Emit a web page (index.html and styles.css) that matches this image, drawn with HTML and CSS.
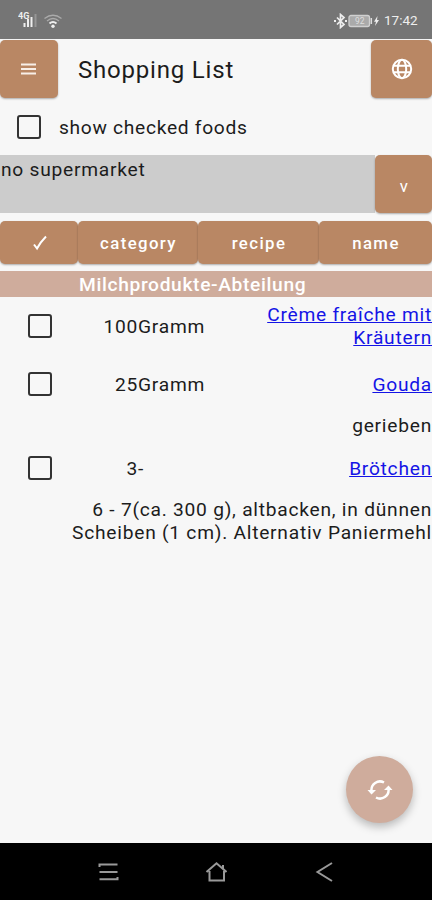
FILE: index.html
```html
<!DOCTYPE html>
<html lang="en">
<head>
    <meta charset="UTF-8">
    <meta name="viewport" content="width=device-width, initial-scale=1">
    <title>Shopping List</title>
    <link rel="stylesheet" href="styles.css">
</head>
<body>
    <div class="status-bar">
        <svg class="signal" width="19" height="18" viewBox="0 0 19 18">
            <path d="M6.500 17v-4M10 17V9M13.500 17V7" stroke="#eee" stroke-width="2"/>
            <path d="M17.500 17V4" stroke="#969696" stroke-width="2"/>
            <text x="0" y="9" font-size="9" font-weight="bold" fill="#eee">4G</text>
        </svg>
        <svg class="wifi" width="20" height="16" viewBox="0 0 20 16" fill="none">
            <path d="M1.5 5.5Q10-1 18.5 5.5M4 8Q10 3 16 8" stroke="#aaa" stroke-width="1.3"/>
            <path d="M6.5 10.5Q10 7.5 13.5 10.5" stroke="#eee" stroke-width="2"/>
            <circle cx="10" cy="13.2" r="1.7" fill="#eee"/>
        </svg>
        <svg class="battery" width="46" height="16" viewBox="0 0 46 16" fill="none">
            <path d="M3 4.5l7 7-3.5 3v-13l3.5 3-7 7" stroke="#eee" stroke-width="1.7"/>
            <path d="M0 8h2M11 8h2" stroke="#eee" stroke-width="1.8"/>
            <rect x="15" y="2.5" width="20.5" height="11" rx="2" fill="#aaa" stroke="#d0d0d0" stroke-width="1.3"/>
            <path d="M37.3 5v6" stroke="#ddd" stroke-width="1.5"/>
            <text x="21" y="11" font-size="8.5" fill="#dedede">92</text>
            <path d="M43.5 3L40 8.7h2l-1 4.3 4-6h-2z" fill="#eee"/>
        </svg>
        <span class="clock">17:42</span>
    </div>

    <header class="app-bar">
        <button class="btn menu-btn" aria-label="Menu">
            <svg width="16" height="12" viewBox="0 0 16 12"><path d="M0 1.5h15M0 6h15M0 10.5h15" stroke="#f8efe8" stroke-width="2"/></svg>
        </button>
        <h1 class="title">Shopping List</h1>
        <button class="btn lang-btn" aria-label="Language">
            <svg width="22" height="22" viewBox="0 0 22 22" fill="none" stroke="#fff" stroke-width="2">
                <circle cx="11" cy="11" r="9.2"/>
                <ellipse cx="11" cy="11" rx="4.2" ry="9.2"/>
                <path d="M2.5 7.800h17M2.5 14.200h17"/>
            </svg>
        </button>
    </header>

    <label class="show-checked">
        <span class="box"></span>
        <span>show checked foods</span>
    </label>

    <div class="market">
        <div class="market-name">no supermarket</div>
        <button class="btn market-btn">v</button>
    </div>

    <div class="sort-row">
        <button class="btn">
            <svg width="16" height="16" viewBox="0 0 16 16"><path d="M2 9.500L5 13.500Q8.500 7 14 1.500" fill="none" stroke="#fff" stroke-width="2"/></svg>
        </button>
        <button class="btn">category</button>
        <button class="btn">recipe</button>
        <button class="btn">name</button>
    </div>

    <h2 class="section">Milchprodukte-Abteilung</h2>

    <main class="list">
        <div class="item">
            <span class="box"></span>
            <span class="amount">100</span>
            <span class="unit">Gramm</span>
            <a class="food" href="#">Crème fraîche mit Kräutern</a>
        </div>
        <div class="item">
            <span class="box"></span>
            <span class="amount">25</span>
            <span class="unit">Gramm</span>
            <a class="food" href="#">Gouda</a>
        </div>
        <p class="note">gerieben</p>
        <div class="item">
            <span class="box"></span>
            <span class="amount">3</span>
            <span class="unit">-</span>
            <a class="food" href="#">Brötchen</a>
        </div>
        <p class="note">6 - 7(ca. 300 g), altbacken, in dünnen Scheiben (1 cm). Alternativ Paniermehl</p>
    </main>

    <button class="fab" aria-label="Refresh">
        <svg width="26" height="22" viewBox="0 0 26 22">
            <path d="M4.500 12A8.500 8.500 0 0 1 17 3.500M21.500 10A8.500 8.500 0 0 1 9 18.500" fill="none" stroke="#fff" stroke-width="2.5"/>
            <path d="M0.500 11h8.500L4.500 15.500zM17 11h8.500L21.500 6.500z" fill="#fff"/>
        </svg>
    </button>

    <nav class="nav-bar">
        <svg width="22" height="20" viewBox="0 0 22 20"><path d="M2.500 5V2.500h18M2.500 10h18M2.500 17.300h18V15" /></svg>
        <svg width="22" height="22" viewBox="0 0 22 22"><path d="M1.500 11L11.500 2.300 21.500 11M4.500 10v9.500h14.500V10M18 7.500V4" /></svg>
        <svg width="22" height="22" viewBox="0 0 22 22"><path d="M19 2L4.500 11l14.500 9" /></svg>
    </nav>
</body>
</html>
```
FILE: styles.css
```css
* {
    box-sizing: border-box;
}

body {
    display: flex;
    flex-direction: column;
    height: 900px;
    margin: 0;
    overflow: hidden;
    background-color: #f7f7f7;
    color: #1c1c1c;
    font-family: Roboto, sans-serif;
    font-size: 19.2px;
    letter-spacing: 0.75px;
    line-height: 23px;
}

svg {
    display: block;
    flex: none;
}

.status-bar {
    display: flex;
    align-items: center;
    flex: none;
    height: 39px;
    padding: 2px 14px 0 18px;
    background-color: #757575;
    letter-spacing: 0;
}

.signal {
    margin-top: -3px;
}

.wifi {
    margin-left: 6px;
}

.battery {
    margin-left: auto;
}

.clock {
    width: 34px;
    margin-left: 4px;
    color: #eee;
    font-size: 13.5px;
    white-space: nowrap;
}

.btn {
    display: flex;
    align-items: center;
    justify-content: center;
    padding: 0 0 0 1px;
    border: none;
    border-radius: 5px;
    background-color: #b98764;
    box-shadow: 0 1px 2px rgba(0, 0, 0, 0.3);
    color: #fff;
    font-family: inherit;
    font-size: 16.8px;
    font-weight: 500;
    letter-spacing: 1.4px;
}

.app-bar {
    display: flex;
    align-items: center;
    flex: none;
    height: 59px;
}

.menu-btn {
    width: 58px;
    height: 58px;
    padding: 0;
}

.title {
    flex: 1;
    margin: 4px 0 0 20px;
    font-size: 24px;
    font-weight: 400;
    letter-spacing: 0.8px;
}

.lang-btn {
    width: 61px;
    height: 58px;
}

.show-checked {
    display: flex;
    align-items: center;
    flex: none;
    gap: 18px;
    height: 57px;
    padding: 1px 0 0 17px;
    letter-spacing: 0.7px;
}

.box {
    flex: none;
    width: 24px;
    height: 24px;
    border: 2px solid #333;
    border-radius: 3px;
}

.market {
    display: flex;
    flex: none;
    height: 58px;
}

.market-name {
    flex: 1;
    padding: 3px 0 0 1px;
    background-color: #ccc;
}

.market-btn {
    width: 57px;
    padding: 3px 0 0 2px;
    font-weight: 400;
}

.sort-row {
    display: grid;
    grid-template-columns: 78px 120px 121px 113px;
    flex: none;
    height: 43px;
    margin-top: 8px;
}

.section {
    flex: none;
    height: 26px;
    margin: 7px 0 0;
    padding-left: 79px;
    background-color: #cfac9c;
    color: #fff;
    font-size: 19.2px;
    font-weight: 500;
    letter-spacing: 0.65px;
    line-height: 27px;
}

.list {
    flex: 1;
}

.item {
    display: grid;
    grid-template-columns: 24px 86px 90px 1fr;
    align-items: center;
    height: 58px;
    padding-left: 28px;
}

.amount,
.food {
    text-align: right;
}

.food {
    color: #1414e6;
    text-decoration-thickness: 1px;
}

.note {
    width: 370px;
    margin: 1px 0 2px auto;
    text-align: right;
}

.fab {
    position: absolute;
    top: 756px;
    left: 346px;
    display: flex;
    align-items: center;
    justify-content: center;
    width: 67px;
    height: 67px;
    padding: 0;
    border: none;
    border-radius: 50%;
    background-color: #cfac9c;
    box-shadow: 0 4px 8px rgba(0, 0, 0, 0.25);
}

.nav-bar {
    display: flex;
    align-items: center;
    justify-content: space-between;
    flex: none;
    height: 57px;
    padding: 0 97px;
    background-color: #000;
}

.nav-bar path {
    fill: none;
    stroke: #999;
    stroke-width: 2;
}
```
